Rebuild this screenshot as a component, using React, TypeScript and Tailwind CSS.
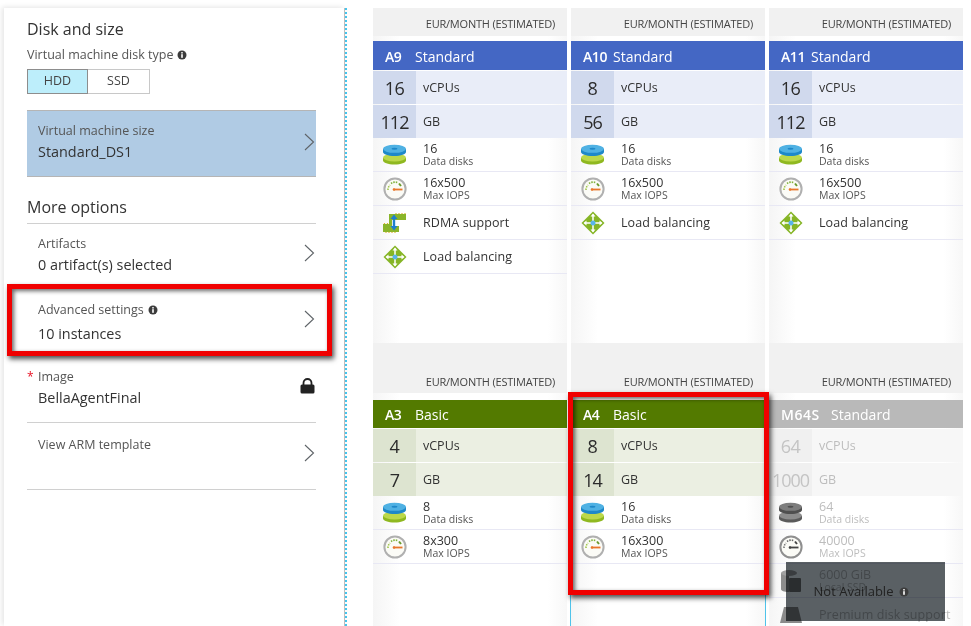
import type { ReactNode } from "react";

function Chevron({ className }: { className?: string }) {
  return (
    <svg width="11" height="18" viewBox="0 0 11 18" fill="none" className={`shrink-0 ${className ?? ""}`}>
      <path d="M1 1l8.5 8L1 17" stroke="#5f6468" strokeWidth="1.1" />
    </svg>
  );
}

function Info() {
  return (
    <svg width="10" height="10" viewBox="0 0 10 10" className="inline-block shrink-0">
      <circle cx="5" cy="5" r="4.5" fill="#3c3c3c" />
      <rect x="4.2" y="4.2" width="1.6" height="3.6" fill="#fff" />
      <rect x="4.2" y="2.1" width="1.6" height="1.4" fill="#fff" />
    </svg>
  );
}

function Lock() {
  return (
    <svg width="15" height="16" viewBox="0 0 15 16" className="mt-[10px] shrink-0">
      <path d="M3.5 7V5a4 4 0 0 1 8 0v2" fill="none" stroke="#222" strokeWidth="1.8" />
      <rect x="0.5" y="6.5" width="14" height="9" rx="1.5" fill="#222" />
    </svg>
  );
}

function DisksIcon({ gray }: { gray?: boolean }) {
  const top = gray ? "#4f4f4f" : "#1e88c9";
  const topLight = gray ? "#7d7d7d" : "#4fb1e3";
  const bottom = gray ? "#5a5a5a" : "#8fb820";
  const bottomLight = gray ? "#8c8c8c" : "#bcd84a";
  return (
    <svg width="25" height="21" viewBox="0 0 25 21">
      <path d="M1 14v2.5c0 2.2 5 4 11.5 4s11.5-1.8 11.5-4V14z" fill={bottom} />
      <ellipse cx="12.5" cy="13.5" rx="11.5" ry="4" fill={bottomLight} />
      <path d="M1 5v3c0 2.2 5 4 11.5 4S24 10.2 24 8V5z" fill={top} />
      <ellipse cx="12.5" cy="4.8" rx="11.5" ry="4" fill={topLight} />
      <ellipse cx="12.5" cy="4.8" rx="3" ry="1" fill={top} />
    </svg>
  );
}

function GaugeIcon({ gray }: { gray?: boolean }) {
  return (
    <svg width="24" height="24" viewBox="0 0 24 24">
      <circle cx="12" cy="12" r="10.6" fill="#fbfbf6" stroke={gray ? "#8f8f8f" : "#b0b0b0"} strokeWidth="2" />
      <path d="M5 13a7 7 0 0 1 2-5" fill="none" stroke={gray ? "#777" : "#9fc54a"} strokeWidth="1.6" strokeDasharray="1.5 1" />
      <path d="M8 6.5a7 7 0 0 1 7-.8" fill="none" stroke={gray ? "#666" : "#7fb13a"} strokeWidth="1.6" strokeDasharray="1.5 1" />
      <path d="M16 6.5l2 2.5" stroke={gray ? "#444" : "#6a9a2c"} strokeWidth="2" />
      <path d="M10.5 12.5h9" stroke={gray ? "#444" : "#e8772b"} strokeWidth="1.8" />
      <circle cx="11" cy="12.5" r="1.3" fill={gray ? "#444" : "#e8772b"} />
    </svg>
  );
}

function RdmaIcon() {
  return (
    <svg width="23" height="20" viewBox="0 0 23 20">
      <path d="M6 1h17v6H9v4H6z" fill="#8ab52a" />
      <path d="M0 11h9v2h7v6H0z" fill="#8ab52a" />
      <path d="M13 0v1M16 0v1M19 0v1M22 0v1M1.500 10v1M4.500 10v1M3 19v1M6 19v1M9 19v1M12 19v1" stroke="#dcb42f" strokeWidth="1.2" />
      <path d="M11 4v11" stroke="#1f7fd0" strokeWidth="2.4" />
      <path d="M7.500 6L11 1.500 14.500 6zM7.500 13L11 17.500 14.500 13z" fill="#1f7fd0" />
    </svg>
  );
}

function BalanceIcon() {
  return (
    <svg width="24" height="24" viewBox="0 0 24 24">
      <path d="M12 .5L23.500 12 12 23.500.5 12z" fill="#86b526" />
      <path d="M12 3.500v17M3.500 12h17" stroke="#fff" strokeWidth="1.5" />
      <path d="M12 2.500l2.500 3h-5zM12 21.500l2.500-3h-5zM2.500 12l3-2.500v5zM21.500 12l-3-2.500v5z" fill="#fff" />
      <circle cx="12" cy="12" r="2.500" fill="#59b4e8" />
    </svg>
  );
}

function PremiumIcon() {
  return (
    <svg width="24" height="18" viewBox="0 0 24 18">
      <path d="M5 1h14l4 16H1z" fill="#8a8a8a" />
    </svg>
  );
}

function StackIcon() {
  return (
    <svg width="22" height="24" viewBox="0 0 22 24">
      <path d="M1 4v16c0 2 3 3 8 3V4z" fill="#8c8c8c" />
      <ellipse cx="9" cy="4" rx="8" ry="3" fill="#a0a0a0" />
      <rect x="9" y="9" width="12" height="14" rx="1" fill="#777" />
    </svg>
  );
}

type Row = { icon: ReactNode; value?: string; label: string };

type Sku = {
  code: string;
  tier: string;
  cpu: string;
  gb: string;
  rows: Row[];
  tone: "blue" | "green" | "gray";
};

const disks = (value: string, gray?: boolean): Row => ({ icon: <DisksIcon gray={gray} />, value, label: "Data disks" });
const iops = (value: string, gray?: boolean): Row => ({ icon: <GaugeIcon gray={gray} />, value, label: "Max IOPS" });
const balancing: Row = { icon: <BalanceIcon />, label: "Load balancing" };

const topRow: Sku[] = [
  {
    code: "A9",
    tier: "Standard",
    cpu: "16",
    gb: "112",
    tone: "blue",
    rows: [disks("16"), iops("16x500"), { icon: <RdmaIcon />, label: "RDMA support" }, balancing],
  },
  { code: "A10", tier: "Standard", cpu: "8", gb: "56", tone: "blue", rows: [disks("16"), iops("16x500"), balancing] },
  { code: "A11", tier: "Standard", cpu: "16", gb: "112", tone: "blue", rows: [disks("16"), iops("16x500"), balancing] },
];

const bottomRow: Sku[] = [
  { code: "A3", tier: "Basic", cpu: "4", gb: "7", tone: "green", rows: [disks("8"), iops("8x300")] },
  { code: "A4", tier: "Basic", cpu: "8", gb: "14", tone: "green", rows: [disks("16"), iops("16x300")] },
  {
    code: "M64S",
    tier: "Standard",
    cpu: "64",
    gb: "1000",
    tone: "gray",
    rows: [
      disks("64", true),
      iops("40000", true),
      { icon: <StackIcon />, value: "6000 GiB", label: "Local SSD" },
      { icon: <PremiumIcon />, label: "Premium disk support" },
    ],
  },
];

const tones = {
  blue: {
    head: "bg-[#4467c4] text-white",
    num: "bg-[#d0d9ed] text-[#2b2b2b]",
    stat: "bg-[#e9edf8] text-[#333]",
    value: "text-[#333]",
    label: "text-[#555]",
  },
  green: {
    head: "bg-[#537a00] text-white",
    num: "bg-[#dde4d0] text-[#2b2b2b]",
    stat: "bg-[#ebefe2] text-[#333]",
    value: "text-[#333]",
    label: "text-[#555]",
  },
  gray: {
    head: "bg-[#b9b9b9] text-white",
    num: "bg-[#f0f0f0] text-[#c4c4c4]",
    stat: "bg-[#f7f7f7] text-[#bdbdbd]",
    value: "text-[#bdbdbd]",
    label: "text-[#bdbdbd]",
  },
};

function SkuCard({ sku, top }: { sku: Sku; top?: boolean }) {
  const t = tones[sku.tone];
  return (
    <div
      className={`flex flex-col overflow-hidden bg-[linear-gradient(90deg,#f5f5f5,#fff_14%,#fff_90%,#f7f7f7)] ${
        top ? "h-[335px]" : "h-[300px]"
      }`}
    >
      <div
        className={`flex shrink-0 items-end justify-end bg-[#f1f1f1] pr-[12px] text-[11px] tracking-[-0.2px] text-[#444] ${
          top ? "h-[28px] pb-[4px]" : "h-[50px] pb-[3px]"
        }`}
      >
        EUR/MONTH (ESTIMATED)
      </div>
      <div
        className={`flex shrink-0 items-center gap-[9px] pl-[12px] text-[14px] ${t.head} ${
          top ? "mt-[5px] h-[29px] pt-[1px]" : "mt-[7px] h-[28px]"
        }`}
      >
        <span className={`font-semibold whitespace-nowrap ${sku.code === "M64S" ? "w-[41px] tracking-[0.5px]" : "w-[21px] tracking-[-0.4px]"}`}>{sku.code}</span>
        <span>{sku.tier}</span>
      </div>
      <div className={`mt-[1px] flex h-[33px] shrink-0 ${t.stat}`}>
        <span className={`flex w-[43px] items-center justify-center overflow-hidden pt-[1px] text-[18px] font-medium tracking-[-0.5px] ${t.num}`}>{sku.cpu}</span>
        <span className="flex items-center pt-[2px] pl-[7px] text-[12.5px] font-medium">vCPUs</span>
      </div>
      <div className={`mt-[1px] flex h-[33px] shrink-0 ${t.stat}`}>
        <span className={`flex w-[43px] items-center justify-center overflow-hidden pt-[1px] text-[18px] font-medium tracking-[-1px] ${t.num}`}>{sku.gb}</span>
        <span className="flex items-center pt-[2px] pl-[7px] text-[12.5px] font-medium">GB</span>
      </div>
      {sku.rows.map((row) => (
        <div key={row.label} className="flex h-[34px] shrink-0 items-center border-b border-[#e8e8f4]">
          <span className="flex w-[43px] shrink-0 items-center justify-center">{row.icon}</span>
          <div className="pt-[2px] pl-[7px]">
            {row.value ? (
              <>
                <p className={`-mt-[1px] text-[12.5px] leading-[11px] ${t.value}`}>{row.value}</p>
                <p className={`mt-[1px] text-[10.5px] leading-[12px] ${t.label}`}>{row.label}</p>
              </>
            ) : (
              <p className={`text-[12.5px] font-medium tracking-[0.1px] ${t.value}`}>{row.label}</p>
            )}
          </div>
        </div>
      ))}
    </div>
  );
}

function OptionRow({ label, value, info, required, right, className, valueClass }: {
  label: string;
  value?: string;
  info?: boolean;
  required?: boolean;
  right: ReactNode;
  className: string;
  valueClass: string;
}) {
  return (
    <div className={`flex items-start justify-between pr-[1px] pl-[11px] ${className}`}>
      <div className="relative">
        {required && <span className="absolute top-0 left-[-11px] text-[12px] text-[#e81123]">*</span>}
        <p className="flex items-center gap-[4px] text-[12.5px] leading-[18px] text-[#555]">
          {label}
          {info && <Info />}
        </p>
        {value && <p className={`text-[14.4px] leading-[20px] text-[#333] ${valueClass}`}>{value}</p>}
      </div>
      {right}
    </div>
  );
}

export default function App() {
  return (
    <div className="relative flex h-[626px] w-[971px] overflow-hidden bg-white font-['Open_Sans',sans-serif]">
      <aside className="mt-[8px] ml-[4px] h-[618px] w-[341px] shrink-0 border-r border-[#bdbdbd] pt-[10px] pr-[28px] pl-[23px] shadow-[-2px_-1px_5px_rgba(0,0,0,0.1)]">
        <h2 className="text-[16px] leading-[22px] text-[#333]">Disk and size</h2>
        <p className="mt-[6px] flex items-center gap-[4px] text-[12.5px] leading-[18px] text-[#555]">
          Virtual machine disk type <Info />
        </p>
        <div className="mt-[5px] flex h-[25px] w-[123px] text-[12.5px] text-[#444]">
          <span className="flex w-[61px] items-center justify-center border border-[#8d8d8d] bg-[#bdeefb]">HDD</span>
          <span className="flex flex-1 items-center justify-center border border-l-0 border-[#c8c8c8]">SSD</span>
        </div>
        <div className="mt-[16px] flex h-[67px] items-center justify-between border-y border-[#b5b5b5] bg-[#b0cbe4] pr-[1px] pl-[11px]">
          <div className="-mt-[4px]">
            <p className="text-[12.5px] leading-[18px] text-[#555]">Virtual machine size</p>
            <p className="mt-[2px] text-[14.4px] leading-[20px] text-[#333]">Standard_DS1</p>
          </div>
          <Chevron className="-mt-[3px]" />
        </div>
        <h2 className="mt-[19px] border-b border-[#d0d0d0] pb-[5px] text-[16px] leading-[22px] text-[#333]">More options</h2>
        <OptionRow
          label="Artifacts"
          value="0 artifact(s) selected"
          valueClass="mt-[2px]"
          right={<Chevron className="mt-[9px]" />}
          className="h-[66px] pt-[11px]"
        />
        <OptionRow
          label="Advanced settings"
          value="10 instances"
          info
          valueClass="mt-[5px]"
          right={<Chevron className="mt-[9px]" />}
          className="h-[66px] pt-[11px]"
        />
        <OptionRow
          label="Image"
          value="BellaAgentFinal"
          required
          valueClass="mt-[2px]"
          right={<Lock />}
          className="h-[67px] border-b border-[#d0d0d0] pt-[12px]"
        />
        <OptionRow
          label="View ARM template"
          valueClass=""
          right={<Chevron className="mt-[8px]" />}
          className="h-[67px] border-b border-[#d0d0d0] pt-[13px]"
        />
      </aside>
      <div className="mt-[8px] h-[618px] w-[2px] shrink-0 border-l-2 border-dotted border-[#45c4ec]" />

      <main className="ml-[26px] grid w-[590px] shrink-0 grid-cols-3 content-start gap-x-[4px] pt-[8px]">
        {topRow.map((sku) => (
          <SkuCard key={sku.code} sku={sku} top />
        ))}
        {bottomRow.map((sku) => (
          <SkuCard key={sku.code} sku={sku} />
        ))}
      </main>

      {/* selected card outline under the callout */}
      <div className="absolute top-[590px] left-[570px] h-[36px] w-[196px] border-x border-[#4fc3ea]" />

      {/* tooltip darkens what is beneath it */}
      <div className="absolute top-[562px] left-[786px] flex h-[59px] w-[159px] items-center justify-center gap-[6px] bg-[#5a6064] pr-[8px] text-[13px] text-[#222] mix-blend-multiply">
        Not Available
        <Info />
      </div>

      {/* red callouts */}
      <div className="absolute top-[284px] left-[7px] h-[72px] w-[325px] border-[5px] border-[#f00000] shadow-[2px_3px_5px_rgba(0,0,0,0.7),inset_2px_2px_4px_rgba(0,0,0,0.6)]" />
      <div className="absolute top-[392px] left-[568px] h-[203px] w-[201px] border-[5px] border-[#f00000] shadow-[2px_3px_5px_rgba(0,0,0,0.7),inset_2px_2px_4px_rgba(0,0,0,0.6)]" />
    </div>
  );
}
